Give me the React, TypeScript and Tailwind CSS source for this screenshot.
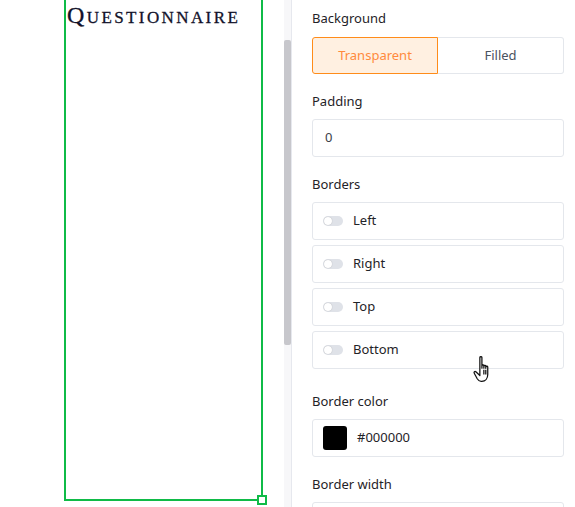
const sans = "font-['Noto_Sans','Open_Sans',sans-serif]";

function Label({ children, className = "" }: { children: string; className?: string }) {
  return (
    <div className={`h-[18px] shrink-0 text-[13px] leading-[18px] text-[#1f2328] ${className}`}>
      {children}
    </div>
  );
}

function Toggle() {
  return (
    <span className="relative inline-block h-[10px] w-[20px] rounded-full bg-[#dfe2e8]">
      <span className="absolute left-[1px] top-[1px] h-[8px] w-[8px] rounded-full bg-white shadow-[0_0_1px_rgba(0,0,0,0.3)]" />
    </span>
  );
}

function BorderRow({ label }: { label: string }) {
  return (
    <div className="flex h-[38px] shrink-0 items-center gap-[10px] rounded-[3px] border border-[#e4e7ec] bg-white px-[10px]">
      <Toggle />
      <span className="text-[13px] text-[#1f2328]">{label}</span>
    </div>
  );
}

function HandCursor() {
  return (
    <svg
      className="absolute left-[472px] top-[355px]"
      width="26"
      height="32"
      viewBox="0 0 22 28"
      fill="white"
      stroke="#111"
      strokeWidth="1.1"
      strokeLinejoin="round"
    >
      <path d="M6.5 2.2c0-1 1.8-1 1.8 0v9.3V9.3c0-1 1.7-1 1.7 0v2.2-1.6c0-1 1.7-1 1.7 0v1.8-1.2c0-1 1.7-1 1.7 0v6.5c0 3.4-2 6-5.2 6H7.6c-1.6 0-2.6-.9-3.4-2.2L1.6 16c-.6-1 .5-2 1.4-1.3l3.5 3.3V2.2z" />
      <path d="M10 13v4M11.7 13v4" fill="none" />
    </svg>
  );
}

export default function App() {
  return (
    <div className={`relative flex h-[507px] w-[575px] overflow-hidden bg-white ${sans}`}>
      {/* canvas */}
      <div className="w-[284px] shrink-0 bg-white">
        <div className="relative ml-[64px] h-[501px] w-[199px] border-2 border-t-0 border-[#0fbb47]">
          <div className="pl-[1px] pt-[3px] font-['Liberation_Serif',serif] text-[24px] leading-[24px] tracking-[2.4px] text-[#12122a] [font-variant:small-caps] [-webkit-text-stroke:0.3px_#12122a]">
            Questionnaire
          </div>
          <span className="absolute -bottom-[6px] -right-[6px] h-[10px] w-[10px] border-2 border-[#0fbb47] bg-white" />
        </div>
      </div>

      {/* scrollbar */}
      <div className="flex w-[8px] shrink-0 border-r border-[#e6e8ee] bg-[#f7f7f9]">
        <div className="mt-[40px] h-[305px] w-[7px] rounded-[2px] bg-[#c7c7cc]" />
      </div>

      {/* properties panel */}
      <div className="flex w-[272px] shrink-0 flex-col pl-[20px] pt-[9px]">
        <Label>Background</Label>
        <div className="mt-[10px] flex h-[37px] w-[252px] shrink-0">
          <div className="flex w-[126px] items-center justify-center rounded-l-[3px] border border-[#ff8c1a] bg-[#fff0e1] text-[13px] text-[#ff8a3d]">
            Transparent
          </div>
          <div className="flex flex-1 items-center justify-center rounded-r-[3px] border border-l-0 border-[#e4e7ec] text-[13px] text-[#4a5260]">
            Filled
          </div>
        </div>

        <Label className="mt-[18px]">Padding</Label>
        <div className="mt-[9px] flex h-[38px] w-[252px] shrink-0 items-center rounded-[3px] border border-[#e4e7ec] px-[12px] text-[13px] text-[#3b4048]">
          0
        </div>

        <Label className="mt-[18px]">Borders</Label>
        <div className="mt-[9px] flex w-[252px] shrink-0 flex-col gap-[5px]">
          <BorderRow label="Left" />
          <BorderRow label="Right" />
          <BorderRow label="Top" />
          <BorderRow label="Bottom" />
        </div>

        <Label className="mt-[23px]">Border color</Label>
        <div className="mt-[9px] flex h-[38px] w-[252px] shrink-0 items-center gap-[10px] rounded-[3px] border border-[#e4e7ec] px-[10px] text-[13px] text-[#1f2328]">
          <span className="h-[24px] w-[24px] rounded-[3px] bg-black" />
          #000000
        </div>

        <Label className="mt-[18px]">Border width</Label>
        <div className="mt-[9px] h-[38px] w-[252px] shrink-0 rounded-[3px] border border-[#e4e7ec]" />
      </div>

      <HandCursor />
    </div>
  );
}
